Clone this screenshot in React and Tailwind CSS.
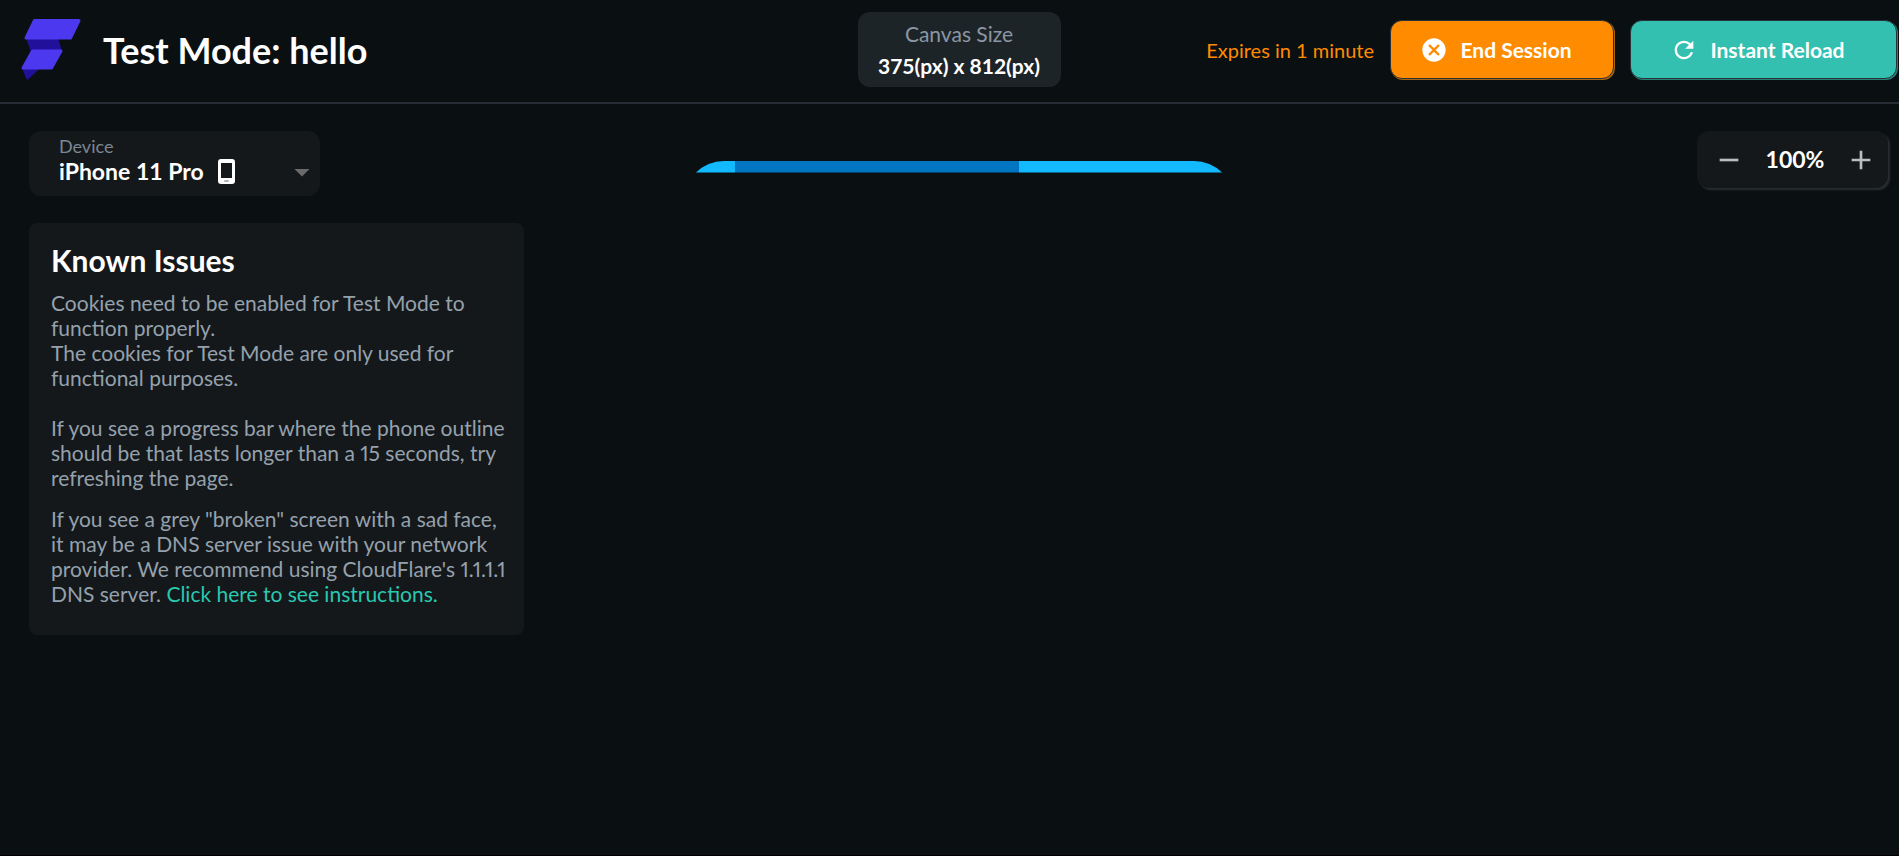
import { MdAdd, MdArrowDropDown, MdCancel, MdRefresh, MdRemove } from "react-icons/md";

function Logo() {
  return (
    <svg className="h-[61px] w-[60px] shrink-0" viewBox="0 0 60 61" aria-hidden="true">
      <g strokeWidth="3" strokeLinejoin="round">
        <path d="M5 19 L37 19 L41 32 L10 33 Z" fill="#20109a" />
        <path d="M3 50 L16 50 L6.500 59 Z" fill="#20109a" stroke="#20109a" />
        <path d="M13.500 1.500 L58 1.500 L49.500 19 L5 19 Z" fill="#4c38ee" stroke="#4c38ee" />
        <path d="M11.500 32 L40 32 L30.500 49 L2 49 Z" fill="#4c38ee" stroke="#4c38ee" />
      </g>
    </svg>
  );
}

function PhoneIcon() {
  return (
    <svg className="h-[25px] w-[17px]" viewBox="0 0 17 25" aria-hidden="true">
      <path
        fillRule="evenodd"
        fill="#fff"
        d="M3 0H14a3 3 0 0 1 3 3V22a3 3 0 0 1-3 3H3a3 3 0 0 1-3-3V3a3 3 0 0 1 3-3ZM3 4V19H14V4Z"
      />
      <rect x="6" y="21" width="5" height="2" rx="1" fill="#b5b5b5" />
    </svg>
  );
}

function Header() {
  return (
    <header className="grid grid-cols-[1fr_auto_1fr] items-center border-b-2 border-[#262d34] pt-3 pr-[2px] pb-[15px] pl-[21px]">
      <div className="flex items-center gap-[22px]">
        <Logo />
        <h1 className="text-4xl font-bold">Test Mode: hello</h1>
      </div>

      <div className="flex h-[75px] w-[203px] flex-col items-center justify-center gap-2 rounded-xl bg-[#1d2428] text-[21px] leading-6">
        <span className="text-[#8b97a2]">Canvas Size</span>
        <span className="font-bold">375(px) x 812(px)</span>
      </div>

      <div className="flex items-center justify-end gap-4">
        <span className="text-xl text-[#ff8b00]">Expires in 1 minute</span>
        <button className="flex h-[59px] w-[224px] items-center justify-center gap-3 rounded-xl border border-[#2a3038] bg-[#ff8b00] pr-3 text-[21px] font-bold shadow-[1px_1px_0_#a8640f]">
          <MdCancel className="size-7" />
          End Session
        </button>
        <button className="flex h-[59px] w-[267px] items-center justify-center gap-3 rounded-xl border border-[#2a3038] bg-[#33c0b0] pr-3 text-[21px] font-bold shadow-[1px_1px_0_#277f76]">
          <MdRefresh className="size-7" />
          Instant Reload
        </button>
      </div>
    </header>
  );
}

function DeviceSelect() {
  return (
    <div className="flex h-[65px] w-[291px] items-end justify-between rounded-xl bg-[#14181b] pb-[6px] pl-[30px]">
      <div className="flex flex-col pb-1">
        <label htmlFor="device" className="text-lg leading-5 text-[#7c8791]">
          Device
        </label>
        <div className="flex items-center gap-3">
          <select id="device" className="w-[147px] appearance-none bg-transparent text-[23px] leading-[30px] font-bold">
            <option>iPhone 11 Pro</option>
          </select>
          <PhoneIcon />
        </div>
      </div>
      <MdArrowDropDown className="size-9 text-[#6a6a6a]" />
    </div>
  );
}

function KnownIssues() {
  return (
    <section className="w-[495px] rounded-lg bg-[#14181b] pt-5 pr-3 pb-[29px] pl-[22px]">
      <h2 className="text-[30px] leading-[34px] font-bold">Known Issues</h2>
      <div className="mt-[13px] text-[21px] leading-[25px] text-[#95a1ac] proportional-nums">
        <p>
          Cookies need to be enabled for Test Mode to
          <br />
          function properly.
          <br />
          The cookies for Test Mode are only used for
          <br />
          functional purposes.
        </p>
        <p className="mt-[25px]">
          If you see a progress bar where the phone outline
          <br />
          should be that lasts longer than a 15 seconds, try
          <br />
          refreshing the page.
        </p>
        <p className="mt-4">
          If you see a grey "broken" screen with a sad face,
          <br />
          it may be a DNS server issue with your network
          <br />
          provider. We recommend using CloudFlare's 1.1.1.1
          <br />
          DNS server.{" "}
          <a href="#" className="text-[#2ac8b0]">
            Click here to see instructions.
          </a>
        </p>
      </div>
    </section>
  );
}

function LoadingBar() {
  return (
    <div role="progressbar" aria-label="Loading" className="relative mt-[30px] h-3 w-[550px] overflow-hidden">
      <div className="h-20 overflow-hidden rounded-t-[40px] bg-[#13b9fd]">
        <div className="ml-[51px] h-full w-[284px] bg-[#0175c2]" />
      </div>
      <div className="absolute inset-x-0 bottom-0 h-px bg-[#0a0f12]/50" />
    </div>
  );
}

function ZoomControl() {
  return (
    <div className="flex h-[57px] w-[191px] items-center justify-between justify-self-end rounded-xl bg-[#14181b] pr-[11px] pl-4 shadow-[2px_2px_2px_#2b2e31]">
      <button aria-label="Zoom out" className="text-[#bdbdbd]">
        <MdRemove className="size-8" />
      </button>
      <span className="text-[23px] font-bold">100%</span>
      <button aria-label="Zoom in" className="text-[#bdbdbd]">
        <MdAdd className="size-8" />
      </button>
    </div>
  );
}

export default function App() {
  return (
    <div className="min-h-screen border-b border-black bg-[#0a0f12] font-['Lato',sans-serif] text-white">
      <Header />
      <main className="grid grid-cols-[1fr_auto_1fr] items-start pt-[27px] pr-[11px] pl-[29px]">
        <div className="flex flex-col gap-[27px]">
          <DeviceSelect />
          <KnownIssues />
        </div>
        <LoadingBar />
        <ZoomControl />
      </main>
    </div>
  );
}
